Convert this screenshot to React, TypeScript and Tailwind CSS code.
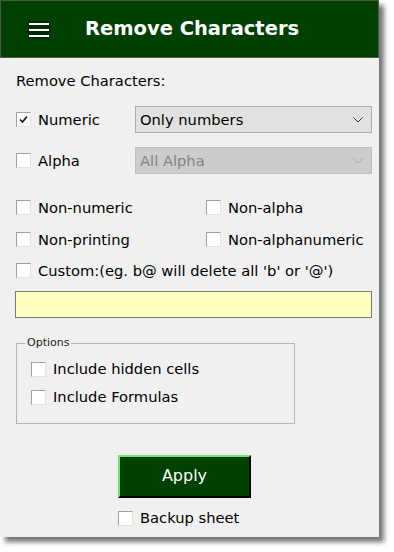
import React from "react";

const font = { fontFamily: '"DejaVu Sans", Verdana, sans-serif' };

// Classic sunken checkbox
const Box = ({ checked = false }: { checked?: boolean }) => (
  <span className="inline-flex h-[15px] w-[15px] shrink-0 items-center justify-center border border-t-[#a0a0a0] border-l-[#a0a0a0] border-b-[#e3e3e3] border-r-[#e3e3e3] bg-white">
    {checked && (
      <svg width="9" height="9" viewBox="0 0 9 9">
        <path d="M1 4.5 L3.5 7 L8 1.5" fill="none" stroke="#111" strokeWidth="1.6" />
      </svg>
    )}
  </span>
);

const Check = ({ label, checked = false, className = "" }: { label: string; checked?: boolean; className?: string }) => (
  <label className={`flex h-[21px] items-center gap-[7px] text-[14.7px] text-black ${className}`}>
    <Box checked={checked} />
    <span>{label}</span>
  </label>
);

const Chevron = ({ color }: { color: string }) => (
  <svg width="10" height="6" viewBox="0 0 10 6">
    <path d="M0.5 0.5 L5 5 L9.5 0.5" fill="none" stroke={color} strokeWidth="1" />
  </svg>
);

export default function App() {
  return (
    <div className="h-[552px] w-[394px] bg-white" style={font}>
      <div className="flex h-[537px] w-[379px] flex-col bg-[#f0f0f0] shadow-[5px_5px_5px_rgba(0,0,0,0.55)]">
        {/* Header */}
        <div className="flex h-[58px] shrink-0 items-center border border-[#4a5a4a] bg-[#004000] pl-[27px]">
          <svg width="22" height="18" viewBox="0 0 22 18" className="mt-[2px]">
            <rect x="0" y="0" width="22" height="18" fill="#002a00" />
            <rect x="1" y="2" width="20" height="2" fill="#fff" />
            <rect x="1" y="8" width="20" height="2" fill="#fff" />
            <rect x="1" y="14" width="20" height="2" fill="#fff" />
          </svg>
          <h1 className="ml-[35px] text-[19.5px] font-bold text-white">Remove Characters</h1>
        </div>

        {/* Body */}
        <div className="flex flex-col pl-[16px] pr-[7px] pt-[12px]">
          <div className="text-[14.7px] text-black">Remove Characters:</div>

          <div className="mt-[14px] flex items-center">
            <Check label="Numeric" checked className="w-[119px]" />
            <div className="flex h-[27px] flex-1 items-center justify-between border border-[#adadad] bg-[#e1e1e1] pl-[4px] pr-[8px] text-[14.7px] text-black">
              <span>Only numbers</span>
              <Chevron color="#333" />
            </div>
          </div>

          <div className="mt-[14px] flex items-center">
            <Check label="Alpha" className="w-[119px]" />
            <div className="flex h-[27px] flex-1 items-center justify-between border border-[#bfbfbf] bg-[#cccccc] pl-[4px] pr-[8px] text-[14.7px] text-[#838383]">
              <span>All Alpha</span>
              <Chevron color="#a8a8a8" />
            </div>
          </div>

          <div className="mt-[23px] grid grid-cols-[190px_1fr] gap-y-[11px]">
            <Check label="Non-numeric" />
            <Check label="Non-alpha" />
            <Check label="Non-printing" />
            <Check label="Non-alphanumeric" />
          </div>

          <Check label="Custom:(eg. b@ will delete all 'b' or '@')" className="mt-[10px]" />

          <div className="mt-[10px] h-[27px] -ml-[1px] border border-[#7a7a7a] bg-[#ffffc0]" />

          <fieldset className="mt-[17px] w-[279px] border border-[#b5b5b5] pb-[15px] pl-[14px] pt-[7px]">
            <legend className="ml-[-6px] px-[2px] text-[11px] text-[#222]">Options</legend>
            <div className="flex flex-col gap-[7px]">
              <Check label="Include hidden cells" />
              <Check label="Include Formulas" />
            </div>
          </fieldset>

          <div className="ml-[102px] mt-[31px] flex flex-col items-start">
            <button className="flex h-[43px] w-[133px] items-center justify-center border-2 border-t-[#70e070] border-l-[#70e070] border-b-black border-r-black bg-[#004000] text-[16px] text-white">
              Apply
            </button>
            <Check label="Backup sheet" className="mt-[10px]" />
          </div>
        </div>
      </div>
    </div>
  );
}
